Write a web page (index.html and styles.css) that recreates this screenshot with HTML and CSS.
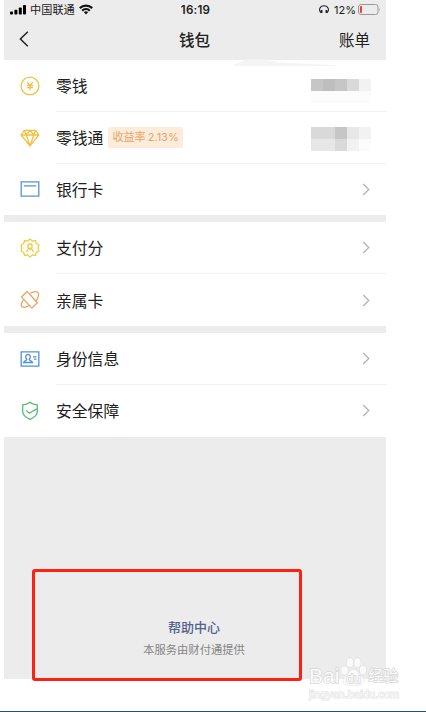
FILE: index.html
```html
<!DOCTYPE html>
<html lang="zh-CN">
<head>
  <meta charset="UTF-8" />
  <title>钱包</title>
  <link rel="stylesheet" href="styles.css">
</head>
<body>
  <div class="phone">
    <header>
      <div class="status">
        <div class="carrier">
          <svg class="signal" width="17" height="10" viewBox="0 0 17 10">
            <rect x="0" y="6.5" width="3" height="3" rx="0.8" />
            <rect x="4.4" y="4.8" width="3" height="4.7" rx="0.8" />
            <rect x="8.8" y="2.5" width="3" height="7" rx="0.8" />
            <rect x="13" y="0" width="3" height="9.5" rx="0.8" />
          </svg>
          <span>中国联通</span>
          <svg class="wifi" width="14" height="11" viewBox="0 0 14 11" fill="none" stroke="#111" stroke-width="2.2">
            <path d="M0.8 4.1a8.9 8.9 0 0 1 12.4 0" />
            <path d="M3.2 6.7a5.5 5.5 0 0 1 7.6 0" />
            <path d="M4.9 8.3a3 3 0 0 1 4.2 0L7 10.4z" fill="#111" stroke="none" />
          </svg>
        </div>
        <span class="time">16:19</span>
        <div class="power">
          <svg width="10" height="9" viewBox="0 0 10 9" fill="none" stroke="#222" stroke-width="1.1">
            <path d="M2.2 7.7C-.8 5.5.6.7 5 .7s5.8 4.8 2.8 7" />
            <path d="M2.6 4.9v3.2M7.4 4.9v3.2" stroke-width="1.7" />
          </svg>
          <span>12%</span>
          <svg width="23" height="11" viewBox="0 0 23 11" fill="none">
            <rect x="0.5" y="0.5" width="19.5" height="10" rx="2.5" stroke="#999" />
            <rect x="2" y="2" width="2" height="7" rx="0.8" fill="#fb3b30" />
            <path d="M21.2 3.8q1.4 1.7 0 3.4z" fill="#999" />
          </svg>
        </div>
      </div>
      <div class="navbar">
        <svg width="10" height="16" viewBox="0 0 10 16" fill="none" stroke="#222" stroke-width="1.5">
          <path d="M8.8 0.8L1.4 8l7.4 7.2" />
        </svg>
        <h1>钱包</h1>
        <span class="bill">账单</span>
      </div>
      <svg class="smudge" width="108" height="8" viewBox="0 0 108 8">
        <path d="M0 7Q6 1 20 0q14 0 23 3c20 2 40 1 65 4z" fill="#f5f5f5" />
      </svg>
    </header>

    <ul class="group">
      <li>
        <svg class="icon" viewBox="0 0 20 20" stroke="#efc243">
          <circle cx="10" cy="10" r="8.9" />
          <path d="M7.2 6.2L10 9.4l2.8-3.2M10 9.4v4.8M7 9.5h6M7 11.7h6" />
        </svg>
        <div class="cell">
          <span>零钱</span>
          <div class="mosaic">
            <i class="g4"></i><i class="g5"></i><i class="g4"></i><i class="g3"></i><i class="g1"></i>
            <i class="g0"></i><i class="g0"></i><i class="g0"></i><i class="g0"></i><i class="g0"></i>
          </div>
        </div>
      </li>
      <li>
        <svg class="icon" viewBox="0 0 20 20" stroke="#efc243">
          <path d="M4.3 2.3h11.4l3.2 4.7L10 18 1.1 7zM1.1 7h17.8M4.3 2.3L6.3 7 10 18l3.7-11 2-4.7M6.3 7L10 2.3 13.7 7" />
        </svg>
        <div class="cell">
          <span>零钱通</span>
          <span class="tag">收益率<b>2.13%</b></span>
          <div class="mosaic">
            <i class="g3"></i><i class="g3"></i><i class="g4"></i><i class="g2"></i><i class="g1"></i>
            <i class="g2"></i><i class="g2"></i><i class="g3"></i><i class="g1"></i><i class="g0"></i>
          </div>
        </div>
      </li>
      <li>
        <svg class="icon" viewBox="0 0 20 20" stroke="#5594d4">
          <path d="M1.2 2.8h17.6v14.3H1.2zM3.8 6.8h12.4" />
        </svg>
        <div class="cell">
          <span>银行卡</span>
          <svg class="arrow" viewBox="0 0 8 13"><path d="M1.2 1l5.6 5.5L1.2 12" /></svg>
        </div>
      </li>
    </ul>

    <ul class="group">
      <li>
        <svg class="icon" viewBox="0 0 20 20" stroke="#efcb45">
          <path d="M10 1.1l2.4 2 3.1-.5.8 3 2.7 1.4-1.1 3 1.1 3-2.7 1.4-.8 3-3.1-.5-2.4 2-2.4-2-3.1.5-.8-3L1 13l1.1-3L1 7l2.7-1.4.8-3 3.1.5z" />
          <circle cx="10" cy="8.2" r="2.2" />
          <path d="M8.8 10l-2.3 3.8M11.2 10l2.3 3.8M9.2 11.5h1.6" />
        </svg>
        <div class="cell">
          <span>支付分</span>
          <svg class="arrow" viewBox="0 0 8 13"><path d="M1.2 1l5.6 5.5L1.2 12" /></svg>
        </div>
      </li>
      <li>
        <svg class="icon" viewBox="0 0 20 20" stroke="#eaa260">
          <path d="M7.3 1.6l10 11.2-5.4 5.3L1.4 6.9z" stroke-linejoin="round" />
          <path d="M10.3 3.1c4-1.8 7.3-2 8-.2.7 1.6-.2 6-3 8.6M3.6 9.5c-2.1 3.1-3 5.8-1.8 7 1.2 1 4.2.9 7.5-1" />
        </svg>
        <div class="cell">
          <span>亲属卡</span>
          <svg class="arrow" viewBox="0 0 8 13"><path d="M1.2 1l5.6 5.5L1.2 12" /></svg>
        </div>
      </li>
    </ul>

    <ul class="group">
      <li>
        <svg class="icon" viewBox="0 0 20 20" stroke="#4f91d3">
          <path d="M1.2 2.8h17.6v14.3H1.2z" />
          <path d="M6.8 10.5C4.7 8 5.7 5.5 8 5.5s3.3 2.5 1.2 5c.2 1.4 3.1 1.2 3.4 3H3.5c.3-1.8 3.1-1.6 3.3-3zM13 7.8h3.5M14 10.2h2.5" />
        </svg>
        <div class="cell">
          <span>身份信息</span>
          <svg class="arrow" viewBox="0 0 8 13"><path d="M1.2 1l5.6 5.5L1.2 12" /></svg>
        </div>
      </li>
      <li>
        <svg class="icon" viewBox="0 0 20 20" stroke="#55bd77">
          <path d="M10 1.4c2.3 1.6 4.6 2.3 7.3 2.5v6.5c0 3.5-3.2 6-7.3 7.9-4.1-1.9-7.3-4.4-7.3-7.9V3.900C5.400 3.700 7.700 3 10 1.400zM6.300 9.600l3 2.600 7.400-4.300" />
        </svg>
        <div class="cell">
          <span>安全保障</span>
          <svg class="arrow" viewBox="0 0 8 13"><path d="M1.2 1l5.6 5.5L1.2 12" /></svg>
        </div>
      </li>
    </ul>

    <footer>
      <a class="help">帮助中心</a>
      <p>本服务由财付通提供</p>
    </footer>
    <div class="highlight"></div>
  </div>

  <div class="watermark">
    <div class="brand">
      <span>Bai</span>
      <svg width="27" height="29" viewBox="0 0 27 29">
        <ellipse cx="4.5" cy="13.5" rx="3.3" ry="4.2" />
        <ellipse cx="10" cy="5.5" rx="3.2" ry="4.6" />
        <ellipse cx="17.5" cy="5.5" rx="3.2" ry="4.6" />
        <ellipse cx="23" cy="13" rx="3.2" ry="4.2" />
        <path d="M13.7 12.5c3.5 0 4.5 4 8 7 4 3.5 2.5 8.5-2 8.5H7.5c-4.5 0-6-5-2-8.500 3.500-3 4.700-7 8.200-7z" />
        <text x="13.5" y="25.5" text-anchor="middle">du</text>
      </svg>
      <span class="cn">经验</span>
    </div>
    <div class="site">jingyan.baidu.com</div>
  </div>
  <div class="bottom-line"></div>
</body>
</html>
```
FILE: styles.css
```css
* {
  margin: 0;
  padding: 0;
  box-sizing: border-box;
}
body {
  position: relative;
  height: 712px;
  overflow: hidden;
  background: #fff;
  font-family: "Liberation Sans", "Noto Sans CJK SC", sans-serif;
  color: #202020;
}
svg {
  display: block;
  flex: none;
}

.phone {
  position: relative;
  width: 382px;
  height: 679px;
  margin-left: 4px;
  display: flex;
  flex-direction: column;
  background: #ececec;
}

/* HEADER */
header {
  position: relative;
  height: 60px;
}
.status {
  height: 19px;
  display: grid;
  grid-template-columns: 1fr auto 1fr;
  align-items: center;
  padding: 0 5px 0 6px;
  font-family: Inter, "Noto Sans CJK SC", sans-serif;
  font-size: 11px;
  line-height: 18px;
}
.carrier {
  display: flex;
  align-items: center;
}
.carrier span {
  margin: 0 4px 0 3px;
  font-size: 11.2px;
}
.time {
  font-size: 11.6px;
  font-weight: 600;
  letter-spacing: 0.2px;
}
.power {
  display: flex;
  align-items: center;
  justify-content: flex-end;
}
.power span {
  margin: 0 2px 0 5px;
}
.navbar {
  height: 40px;
  display: grid;
  grid-template-columns: 1fr auto 1fr;
  align-items: center;
  padding: 0 16px 0 15px;
}
h1 {
  font-size: 15.5px;
  font-weight: 500;
}
.bill {
  justify-self: end;
  font-size: 15.5px;
}
.smudge {
  position: absolute;
  left: 229px;
  bottom: -7px;
}

/* LIST */
.group {
  list-style: none;
  margin-bottom: 7px;
  background: #fff;
}
li {
  height: 51.8px;
  display: flex;
  align-items: center;
  padding-left: 16px;
}
.icon {
  width: 20px;
  height: 20px;
  margin-right: 16px;
  fill: none;
  stroke-width: 1.3;
}
.cell {
  flex: 1;
  height: 100%;
  display: flex;
  align-items: center;
  padding-right: 15px;
  border-bottom: 1px solid #f1f1f1;
  font-size: 15.8px;
}
li:last-child .cell {
  border-bottom: none;
}
.arrow {
  width: 8px;
  height: 13px;
  margin-left: auto;
  margin-right: 1px;
  fill: none;
  stroke: #b4b4b4;
  stroke-width: 1.3;
}
.tag {
  height: 21px;
  margin-left: 5px;
  padding: 0 4px;
  border-radius: 3px;
  background: #fcecdc;
  color: #e8a565;
  font-size: 11.1px;
  line-height: 21px;
}
.tag b {
  margin-left: 2px;
  font-family: Inter, sans-serif;
  font-size: 11px;
  font-weight: 400;
}

/* blurred amounts */
.mosaic {
  display: grid;
  grid-template-columns: repeat(5, 12px);
  grid-auto-rows: 12px;
  margin-left: auto;
  margin-top: 3px;
}
.group li:first-child .mosaic {
  margin-top: 11px;
}
.g0 { background: #fcfcfc; }
.g1 { background: #f2f2f2; }
.g2 { background: #e7e7e7; }
.g3 { background: #d9d9d9; }
.g4 { background: #c6c6c6; }
.g5 { background: #bebebe; }

/* FOOTER */
footer {
  margin-top: auto;
  padding: 0 2px 20px 0;
  text-align: center;
}
.help {
  display: block;
  color: #53628f;
  font-size: 13px;
  font-weight: 500;
  line-height: 20px;
}
footer p {
  margin-top: 3px;
  color: #858585;
  font-size: 11.3px;
  line-height: 18px;
}
.highlight {
  position: absolute;
  left: 28px;
  top: 569px;
  width: 270px;
  height: 112px;
  border: 3px solid #fe2112;
  border-radius: 3px;
}

/* WATERMARK */
.watermark {
  position: absolute;
  left: 309px;
  top: 657px;
  width: 92px;
  color: #fafafa;
  -webkit-text-stroke: 1.4px #d8d8d8;
  paint-order: stroke fill;
}
.brand {
  height: 31px;
  display: flex;
  align-items: flex-end;
  font-size: 20px;
  line-height: 25px;
}
.brand svg {
  margin: 0 1px 2px 1px;
  fill: #fafafa;
  stroke: #d8d8d8;
  stroke-width: 0.8;
}
.brand span:first-child {
  font-size: 21px;
}
.brand text {
  font-size: 13px;
  stroke-width: 1.4;
}
.brand .cn {
  font-size: 15px;
}
.site {
  font-size: 11px;
  line-height: 12px;
  letter-spacing: 0.1px;
  -webkit-text-stroke: 1px #e0e0e0;
}
.bottom-line {
  position: absolute;
  left: 0;
  bottom: 0;
  width: 100%;
  height: 1px;
  background: #24506b;
}
```
